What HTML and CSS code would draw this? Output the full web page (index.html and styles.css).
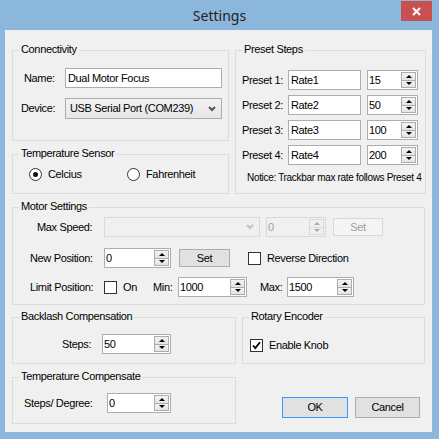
FILE: index.html
```html
<!DOCTYPE html>
<html>
<head>
<meta charset="utf-8">
<link rel="stylesheet" href="styles.css">
</head>
<body>
<div class="window">
  <div class="titlebar">
    <span class="title">Settings</span>
    <div class="close"><svg width="9" height="9" viewBox="0 0 9 9"><path d="M1 1L8 8M8 1L1 8" stroke="#fff" stroke-width="2"/></svg></div>
  </div>
  <div class="client">
    <div class="row1">
      <div class="col1">
        <div class="g g-conn">
          <span class="lg">Connectivity</span>
          <div class="frow r-name"><span class="lbl lw-conn pl-name">Name:</span><div class="tb w-name">Dual Motor Focus</div></div>
          <div class="frow r-dev"><span class="lbl lw-conn pl-dev">Device:</span><div class="cb w-name"><span>USB Serial Port (COM239)</span><svg class="chev" width="8" height="6" viewBox="0 0 8 6"><path d="M1 1L4 4L7 1" fill="none" stroke="#555" stroke-width="2"/></svg></div></div>
        </div>
        <div class="g g-temp">
          <span class="lg">Temperature Sensor</span>
          <div class="radios">
            <div class="ri ri1"><span class="radio on"></span><span class="rl">Celcius</span></div>
            <div class="ri"><span class="radio"></span><span class="rl">Fahrenheit</span></div>
          </div>
        </div>
      </div>
      <div class="g g-preset">
        <span class="lg">Preset Steps</span>
        <div class="frow pr pr1"><span class="lbl lw-pre">Preset 1:</span><div class="tb w-rate">Rate1</div><div class="sp w-pn"><span class="v">15</span><span class="btns"><span class="ar up"></span><span class="ar dn"></span></span></div></div>
        <div class="frow pr"><span class="lbl lw-pre">Preset 2:</span><div class="tb w-rate">Rate2</div><div class="sp w-pn"><span class="v">50</span><span class="btns"><span class="ar up"></span><span class="ar dn"></span></span></div></div>
        <div class="frow pr"><span class="lbl lw-pre">Preset 3:</span><div class="tb w-rate">Rate3</div><div class="sp w-pn"><span class="v">100</span><span class="btns"><span class="ar up"></span><span class="ar dn"></span></span></div></div>
        <div class="frow pr"><span class="lbl lw-pre">Preset 4:</span><div class="tb w-rate">Rate4</div><div class="sp w-pn"><span class="v">200</span><span class="btns"><span class="ar up"></span><span class="ar dn"></span></span></div></div>
        <div class="notice">Notice: Trackbar max rate follows Preset 4</div>
      </div>
    </div>

    <div class="g g-motor">
      <span class="lg">Motor Settings</span>
      <div class="frow m1"><span class="lbl lw-mot pl-max">Max Speed:</span>
        <div class="cb dis w-maxcb"><span></span><svg class="chev" width="8" height="6" viewBox="0 0 8 6"><path d="M1 1L4 4L7 1" fill="none" stroke="#c2c2c2" stroke-width="2"/></svg></div>
        <div class="sp dis w-maxsp"><span class="v">0</span><span class="btns"><span class="ar up"></span><span class="ar dn"></span></span></div>
        <div class="btn dis w-set1">Set</div>
      </div>
      <div class="frow m2"><span class="lbl lw-mot pl-pos">New Position:</span>
        <div class="sp w-newpos"><span class="v">0</span><span class="btns"><span class="ar up"></span><span class="ar dn"></span></span></div>
        <div class="btn w-set2">Set</div>
        <span class="chk ml-rev"></span><span class="cl">Reverse Direction</span>
      </div>
      <div class="frow m3"><span class="lbl lw-mot pl-pos">Limit Position:</span>
        <span class="chk"></span><span class="cl w-on">On</span>
        <span class="lbl w-min">Min:</span>
        <div class="sp w-min-sp"><span class="v">1000</span><span class="btns"><span class="ar up"></span><span class="ar dn"></span></span></div>
        <span class="lbl w-max">Max:</span>
        <div class="sp w-max-sp"><span class="v">1500</span><span class="btns"><span class="ar up"></span><span class="ar dn"></span></span></div>
      </div>
    </div>

    <div class="row3">
      <div class="col3">
        <div class="g g-back">
          <span class="lg">Backlash Compensation</span>
          <div class="frow b1"><span class="lbl lw-back">Steps:</span>
            <div class="sp w-steps"><span class="v">50</span><span class="btns"><span class="ar up"></span><span class="ar dn"></span></span></div>
          </div>
        </div>
        <div class="g g-tcomp">
          <span class="lg">Temperature Compensate</span>
          <div class="frow t1"><span class="lbl lw-tc">Steps/ Degree:</span>
            <div class="sp w-deg"><span class="v">0</span><span class="btns"><span class="ar up"></span><span class="ar dn"></span></span></div>
          </div>
        </div>
      </div>
      <div class="col4">
        <div class="g g-rot">
          <span class="lg">Rotary Encoder</span>
          <div class="frow k1"><span class="chk on"><svg width="11" height="11" viewBox="0 0 11 11"><path d="M2 5.5L4.3 8L9 2.2" fill="none" stroke="#000" stroke-width="1.8"/></svg></span><span class="cl">Enable Knob</span></div>
        </div>
        <div class="btnrow">
          <div class="btn ok">OK</div>
          <div class="btn cancel">Cancel</div>
        </div>
      </div>
    </div>
  </div>
</div>
</body>
</html>
```
FILE: styles.css
```css
* { box-sizing: border-box; }
html, body { margin: 0; padding: 0; }
body {
  background: #8cb7dc;
  font-family: "Liberation Sans", Arial, sans-serif;
  font-size: 11px;
  letter-spacing: -0.35px;
  color: #000;
}
.window { width: 439px; height: 439px; display: flex; flex-direction: column; }
.titlebar {
  height: 30px; position: relative;
  display: flex; align-items: center; justify-content: center;
}
.title {
  font-family: "Noto Sans", "Open Sans", sans-serif;
  font-size: 14px; letter-spacing: 0; color: #222;
  margin-top: 0px;
}
.close {
  position: absolute; right: 7px; top: 1px;
  width: 31px; height: 20px; background: #c75050;
  display: flex; align-items: center; justify-content: center;
}
.client {
  margin-left: 5px; width: 427px; height: 402px;
  background: #f0f0f0;
  padding: 20px 0 0 7px;
}
.row1 { display: flex; }
.col1 { display: flex; flex-direction: column; gap: 13px; width: 217px; }
.g { position: relative; border: 1px solid #dcdcdc; }
.lg {
  position: absolute; top: -8px; left: 6px;
  padding: 0 2px; background: #f0f0f0; line-height: 13px; white-space: nowrap;
}
.g-conn { height: 91px; }
.g-temp { height: 40px; }
.g-preset { width: 191px; height: 144px; margin-left: 6px; }
.g-motor { width: 413px; height: 98px; margin-top: 13px; }
.row3 { display: flex; margin-top: 12px; }
.col3 { display: flex; flex-direction: column; gap: 13px; width: 224px; }
.col4 { width: 183px; margin-left: 6px; display: flex; flex-direction: column; }
.g-back, .g-tcomp { height: 47px; }
.g-rot { height: 47px; }

.frow { display: flex; align-items: center; height: 20px; line-height: 13px; white-space: nowrap; }
.lbl { display: block; flex: none; }
.tb {
  height: 20px; border: 1px solid #abadb3; background: #fff;
  padding-left: 2px; display: flex; align-items: center; flex: none;
}
.cb {
  height: 21px; border: 1px solid #acacac;
  background: linear-gradient(#f2f2f2, #e6e6e6);
  display: flex; align-items: center; justify-content: space-between;
  padding: 0 5px 0 4px; flex: none;
}
.cb.dis { background: #f0f0f0; border-color: #d9d9d9; height: 20px; }
.chev { display: block; }

/* Connectivity */
.r-name { margin-top: 17px; }
.r-dev { margin-top: 10px; height: 21px; }
.lw-conn { width: 52px; }
.pl-name { padding-left: 11px; }
.pl-dev { padding-left: 8px; }
.w-name { width: 157px; }

/* temp sensor */
.radios { display: flex; margin-top: 13px; height: 13px; align-items: center; line-height: 13px; }
.ri { display: flex; align-items: center; }
.ri1 { width: 114px; padding-left: 16px; }
.radio {
  width: 13px; height: 13px; border: 1px solid #333; border-radius: 50%;
  background: #fff; display: flex; align-items: center; justify-content: center; flex: none;
}
.radio.on::after { content: ""; width: 5px; height: 5px; border-radius: 50%; background: #111; }
.rl { margin-left: 6px; }

/* presets */
.pr { margin-top: 5px; }
.pr1 { margin-top: 19px; }
.lw-pre { width: 52px; padding-left: 6px; }
.w-rate { width: 73px; }
.w-pn { width: 51px; margin-left: 6px; }
.notice { font-size: 10px; letter-spacing: -0.32px; margin-top: 6px; padding-left: 11px; line-height: 13px; white-space: nowrap; }

/* spinner */
.sp {
  height: 20px; border: 1px solid #abadb3; background: #fff;
  display: flex; flex: none;
}
.sp .v { flex: 1; padding-left: 1px; display: flex; align-items: center; }
.btns { width: 15px; display: flex; flex-direction: column; margin: 1px 1px 1px 0; }
.ar {
  flex: 1; border: 1px solid #acacac; background: linear-gradient(#f3f3f3, #e4e4e4);
  display: flex; align-items: center; justify-content: center;
}
.ar + .ar { margin-top: 0; border-top: none; }
.ar.up::after { content: ""; border-left: 3px solid transparent; border-right: 3px solid transparent; border-bottom: 3px solid #000; }
.ar.dn::after { content: ""; border-left: 3px solid transparent; border-right: 3px solid transparent; border-top: 3px solid #000; }
.sp.dis { background: #f0f0f0; border-color: #d9d9d9; color: #a0a0a0; }
.sp.dis .ar { border-color: #d9d9d9; background: #f0f0f0; }
.sp.dis .ar.up::after { border-bottom-color: #a8a8a8; }
.sp.dis .ar.dn::after { border-top-color: #a8a8a8; }

/* buttons */
.btn {
  border: 1px solid #adadad; background: #e1e1e1;
  display: flex; align-items: center; justify-content: center; flex: none;
  height: 18px; line-height: 13px;
}
.btn.dis { border-color: #d9d9d9; background: #f4f4f4; color: #a0a0a0; }

/* motor */
.m1 { margin-top: 9px; }
.m2 { margin-top: 11px; }
.m3 { margin-top: 9px; }
.lw-mot { width: 91px; }
.pl-max { padding-left: 24px; }
.pl-pos { padding-left: 17px; }
.w-maxcb { width: 156px; }
.w-maxsp { width: 60px; margin-left: 6px; }
.w-set1 { width: 50px; margin-left: 7px; }
.w-newpos { width: 67px; }
.w-set2 { width: 51px; margin-left: 8px; }
.chk {
  width: 13px; height: 13px; border: 1px solid #333; background: #fff; flex: none;
  display: flex; align-items: center; justify-content: center;
}
.ml-rev { margin-left: 18px; }
.cl { margin-left: 6px; }
.w-on { width: 30px; }
.w-min { width: 25px; }
.w-min-sp { width: 69px; }
.w-max { width: 27px; margin-left: 13px; }
.w-max-sp { width: 67px; }

/* backlash */
.b1 { margin-top: 16px; }
.lw-back { width: 89px; padding-left: 49px; }
.w-steps { width: 69px; }
.t1 { margin-top: 15px; }
.lw-tc { width: 94px; padding-left: 11px; }
.w-deg { width: 64px; }

/* rotary */
.k1 { margin-top: 21px; height: 13px; padding-left: 7px; }

.btnrow { display: flex; margin-top: 33px; }
.btn.ok { width: 66px; height: 21px; margin-left: 40px; border-color: #3399ff; }
.btn.cancel { width: 65px; height: 21px; margin-left: 7px; }
```
